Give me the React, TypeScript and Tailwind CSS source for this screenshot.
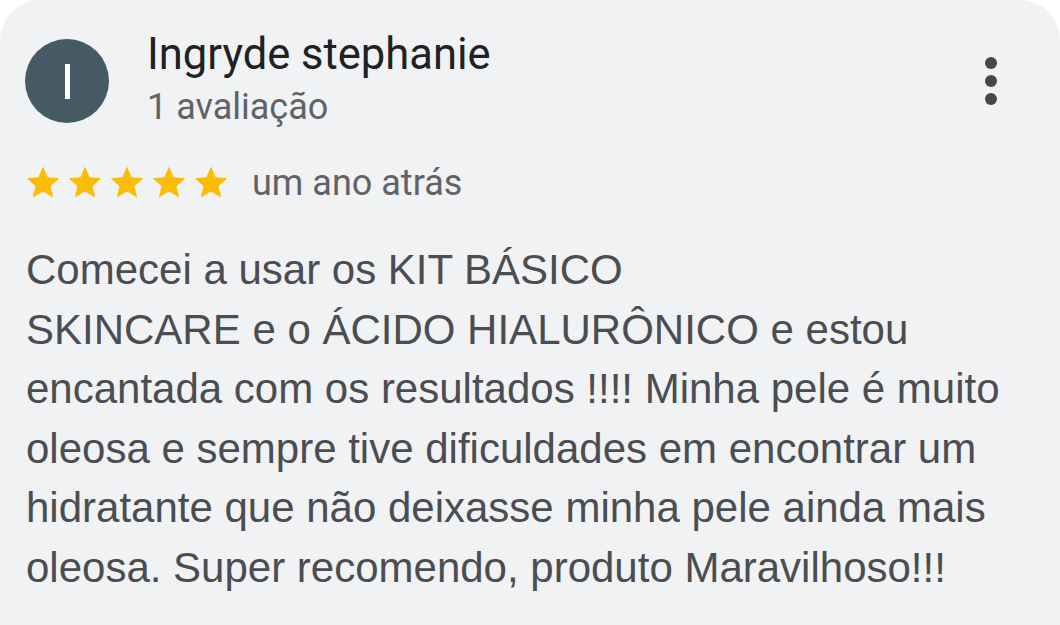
import React from "react";

function Star() {
  return (
    <svg width="38" height="36" viewBox="0 0 24 24" className="block">
      <path
        fill="#fbbc04"
        d="M12 1.6l3.1 7.2 7.8.7-5.9 5.2 1.8 7.7L12 18.4l-6.8 4 1.8-7.7-5.9-5.2 7.8-.7z"
      />
    </svg>
  );
}

export default function App() {
  const lines = [
    "Comecei a usar os KIT BÁSICO",
    "SKINCARE e o ÁCIDO HIALURÔNICO e estou",
    "encantada com os resultados !!!! Minha pele é muito",
    "oleosa e sempre tive dificuldades em encontrar um",
    "hidratante que não deixasse minha pele ainda mais",
    "oleosa. Super recomendo, produto Maravilhoso!!!",
  ];
  return (
    <div className="w-[1060px] h-[625px] bg-white overflow-hidden">
      <div className="h-[625px] bg-[#f1f2f4] rounded-t-[40px] pl-[25px] pr-[40px] pt-[39px]">
        <div className="flex items-start">
          <div className="w-[84px] h-[84px] rounded-full bg-[#455a64] flex items-center justify-center shrink-0">
            <div className="w-[5px] h-[35px] bg-white" />
          </div>
          <div className="ml-[38px] flex-1 flex flex-col" style={{ fontFamily: "Roboto, sans-serif" }}>
            <div className="text-[43.5px] leading-[44px] text-[#202124] mt-[-6px]">Ingryde stephanie</div>
            <div className="text-[36px] leading-[40px] text-[#5f6368] mt-[10px]">1 avaliação</div>
          </div>
          <div className="flex flex-col gap-[6px] mt-[18px] mr-[23px]">
            <div className="w-[12px] h-[12px] rounded-full bg-[#474747]" />
            <div className="w-[12px] h-[12px] rounded-full bg-[#474747]" />
            <div className="w-[12px] h-[12px] rounded-full bg-[#474747]" />
          </div>
        </div>
        <div className="flex items-center mt-[34px]">
          <div className="flex gap-[4px] ml-[-1px]">
            <Star />
            <Star />
            <Star />
            <Star />
            <Star />
          </div>
          <div className="ml-[22px] text-[36px] leading-[40px] text-[#5f6368] mt-[2px]" style={{ fontFamily: "Roboto, sans-serif" }}>
            um ano atrás
          </div>
        </div>
        <div
          className="mt-[37px] text-[42px] leading-[59.6px] text-[#4a4d51] ml-[1px]"
          style={{ fontFamily: '"Liberation Sans", Arial, sans-serif' }}
        >
          {lines.map((l, i) => (
            <div key={i} className="whitespace-nowrap">
              {l}
            </div>
          ))}
        </div>
      </div>
    </div>
  );
}
